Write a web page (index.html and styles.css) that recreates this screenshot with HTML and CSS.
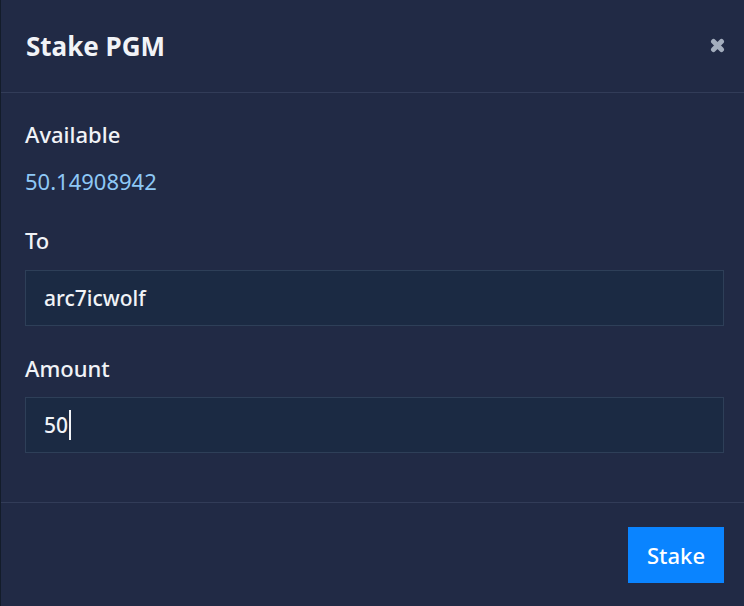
FILE: index.html
```html
<!DOCTYPE html>
<html>
<head>
<meta charset="utf-8">
<link rel="stylesheet" href="styles.css">
</head>
<body>
<div class="modal">
  <div class="modal-header">
    <h2 class="title">Stake PGM</h2>
    <button class="close" aria-label="Close">
      <svg width="15" height="15" viewBox="0 0 15 15"><path d="M3.5 3.5 L11.5 11.5 M11.5 3.5 L3.5 11.5" stroke="#a3adbd" stroke-width="5" stroke-linecap="round"/></svg>
    </button>
  </div>
  <div class="modal-body">
    <div class="label">Available</div>
    <div class="balance">50.14908942</div>
    <div class="label to">To</div>
    <div class="input">arc7icwolf</div>
    <div class="label amount">Amount</div>
    <div class="input"><span>50</span><span class="caret"></span></div>
  </div>
  <div class="modal-footer">
    <button class="btn">Stake</button>
  </div>
</div>
</body>
</html>
```

FILE: styles.css
```css
html, body {
  margin: 0;
  padding: 0;
  background: #212a45;
}
body {
  font-family: "Noto Sans", "Open Sans", sans-serif;
  color: #f1f3f7;
  width: 744px;
  height: 606px;
  overflow: hidden;
}
.modal {
  height: 606px;
  border-left: 1px solid #131c2a;
  background: #212a45;
  box-sizing: border-box;
  display: flex;
  flex-direction: column;
}
.modal-header {
  height: 93px;
  box-sizing: border-box;
  border-bottom: 1px solid #323c58;
  display: flex;
  align-items: center;
  justify-content: space-between;
  padding: 0 19px 0 25px;
}
.title {
  margin: 0;
  font-size: 26px;
  font-weight: 700;
  letter-spacing: 0;
}
.close {
  background: none;
  border: 0;
  padding: 0;
  display: flex;
  margin-top: -2px;
}
.modal-body {
  padding: 27px 20px 0 24px;
  height: 410px;
  box-sizing: border-box;
  border-bottom: 1px solid #323c58;
}
.label {
  font-size: 22px;
  line-height: 28px;
  font-weight: 500;
}
.balance {
  font-size: 22px;
  line-height: 28px;
  color: #8ec8f6;
  margin-top: 19px;
}
.to { margin-top: 31px; }
.amount { margin-top: 28px; }
.input {
  margin-top: 15px;
  height: 56px;
  box-sizing: border-box;
  background: #1b2a43;
  border: 1px solid #2e3f58;
  display: flex;
  align-items: center;
  padding-left: 18px;
  font-size: 21px;
  font-weight: 500;
}
.to + .input { margin-top: 16px; }
.caret {
  display: inline-block;
  width: 2px;
  height: 30px;
  background: #f1f3f7;
  margin-left: 1px;
}
.modal-footer {
  flex: 1;
  display: flex;
  justify-content: flex-end;
  align-items: flex-start;
  padding: 24px 20px 0 0;
}
.btn {
  width: 96px;
  height: 56px;
  background: #0a84ff;
  color: #fff;
  border: 0;
  font-family: inherit;
  font-size: 22px;
  font-weight: 500;
  padding: 0;
}
```
